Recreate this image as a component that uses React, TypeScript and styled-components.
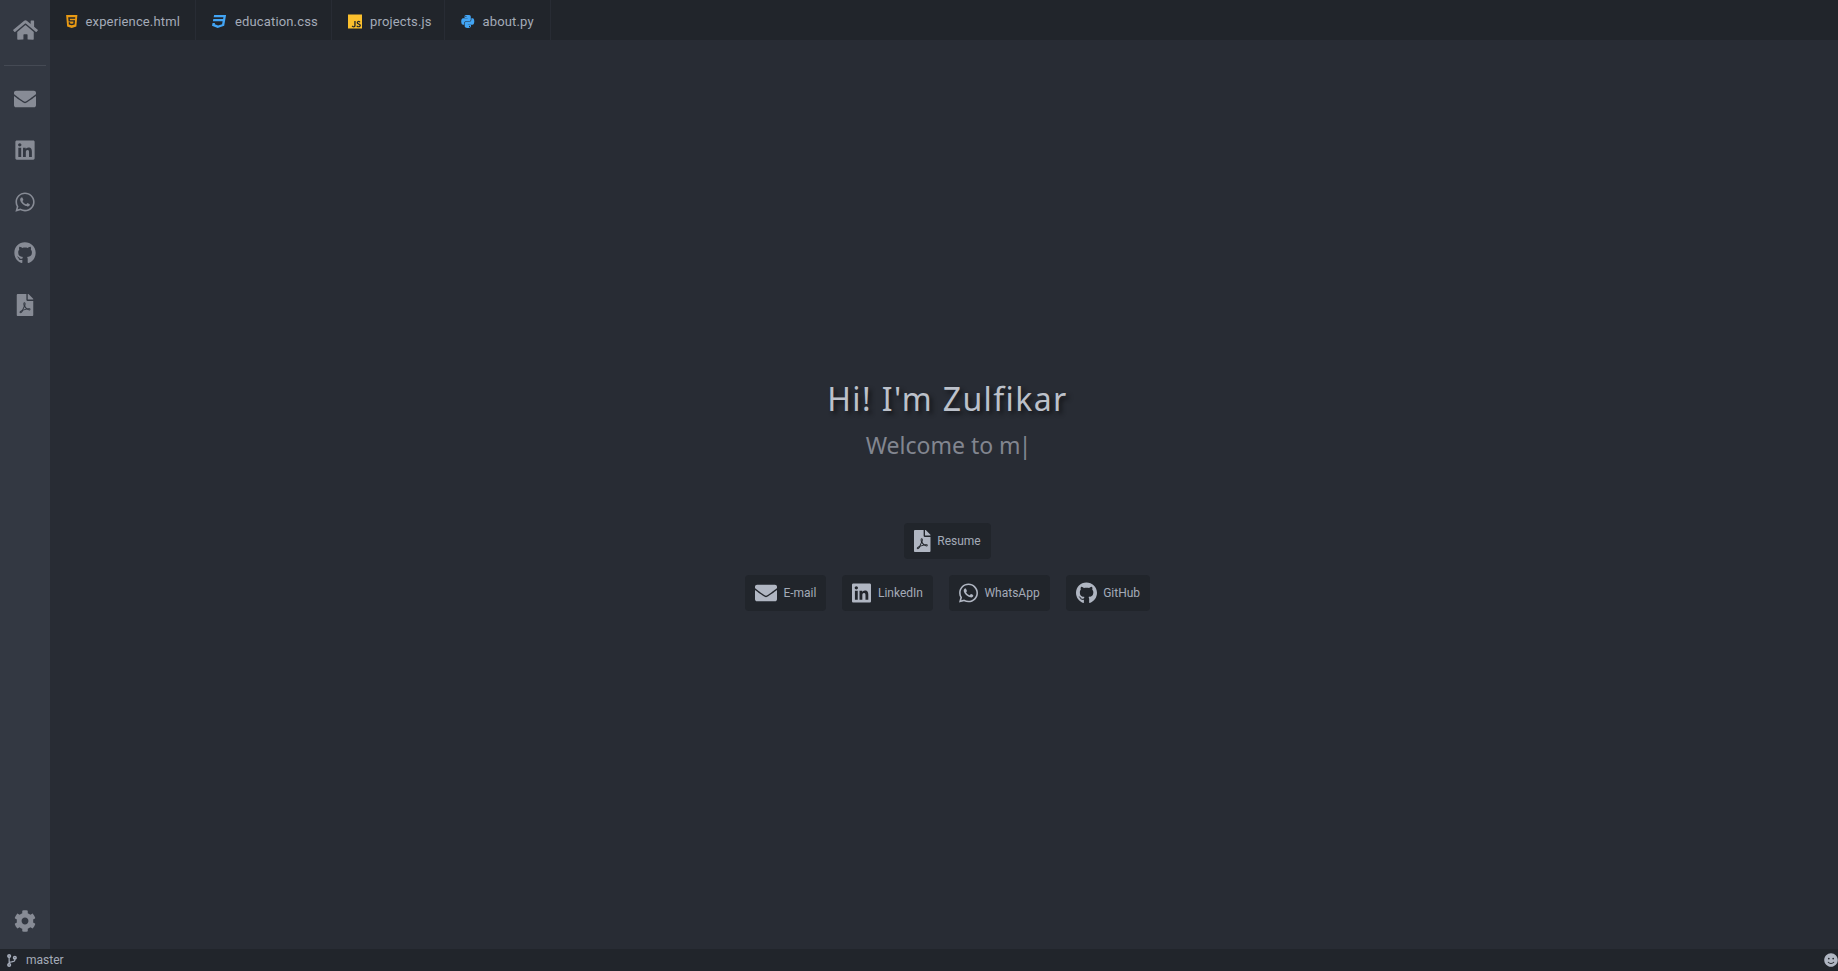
import React from 'react';
import styled, { createGlobalStyle } from 'styled-components';
import { FaHome, FaEnvelope, FaLinkedin, FaWhatsapp, FaGithub, FaFilePdf, FaCog, FaSmile, FaCodeBranch, FaPython, FaHtml5, FaCss3 } from 'react-icons/fa';
import { SiJavascript } from 'react-icons/si';

const GlobalStyle = createGlobalStyle`
  html, body { margin: 0; height: 100%; background: #282c34; }
  #root { height: 100%; }
  * { box-sizing: border-box; }
`;

const Page = styled.div`
  width: 1838px;
  height: 971px;
  display: flex;
  flex-direction: column;
  overflow: hidden;
  font-family: Roboto, "Noto Sans", sans-serif;
  color: #abb2bf;
`;

const Body = styled.div`
  flex: 1;
  display: flex;
  min-height: 0;
`;

const Sidebar = styled.nav`
  width: 50px;
  flex-shrink: 0;
  background: #333842;
  display: flex;
  flex-direction: column;
  align-items: center;
  color: #878b95;
  padding: 8px 0 2px;
`;

const SideLink = styled.a`
  width: 50px;
  height: 51.5px;
  display: flex;
  align-items: center;
  justify-content: center;
  font-size: 22px;
`;

const HomeLink = styled(SideLink)`
  height: 44px;

  svg {
    width: 25px;
    height: 22px;
  }
`;

const Divider = styled.hr`
  width: 42px;
  height: 1px;
  border: 0;
  margin: 13px 0 7px;
  background: #454a54;
`;

const Spacer = styled.div`
  flex: 1;
`;

const Main = styled.main`
  flex: 1;
  display: flex;
  flex-direction: column;
  min-width: 0;
`;

const TabBar = styled.div`
  height: 40px;
  background: #21252b;
  display: flex;
  flex-shrink: 0;
`;

const Tab = styled.div<{ $width: number }>`
  width: ${(p) => p.$width}px;
  flex-shrink: 0;
  display: flex;
  align-items: center;
  gap: 8px;
  padding: 2px 0 0 16px;
  font-size: 13px;
  letter-spacing: 0.15px;
  color: #a4abb8;
  border-right: 1px solid #282c34;
  white-space: nowrap;
`;

const TabIcon = styled.span<{ $color: string; $width: number }>`
  display: flex;
  width: ${(p) => p.$width}px;
  height: 15px;
  color: ${(p) => p.$color};

  svg {
    width: 100%;
    height: 100%;
  }
`;

const Hero = styled.section`
  flex: 1;
  display: flex;
  flex-direction: column;
  align-items: center;
  padding-left: 7px;
  padding-top: 337px;
`;

const Title = styled.h1`
  margin: 0;
  font-family: "Noto Sans", sans-serif;
  font-size: 32px;
  line-height: 44px;
  font-weight: 400;
  letter-spacing: 1.4px;
  color: #bcc1ca;
  text-shadow: 3px 3px 4px #14161a;
`;

const Subtitle = styled.p`
  margin: 6px 0 0;
  padding-left: 2px;
  font-family: "Noto Sans", sans-serif;
  font-size: 23px;
  line-height: 36px;
  color: #828690;
`;

const Cursor = styled.span`
  margin-left: -2px;
`;

const ButtonRow = styled.div<{ $top: number }>`
  display: flex;
  gap: 16px;
  margin-top: ${(p) => p.$top}px;
`;

const LinkButton = styled.a`
  height: 36px;
  display: flex;
  align-items: center;
  gap: 6.5px;
  padding: 0 10px;
  background: #21252b;
  border-radius: 4px;
  font-size: 12px;
  color: #a4abb8;
  white-space: nowrap;
`;

const ButtonIcon = styled.span<{ $width: number }>`
  display: flex;
  width: ${(p) => p.$width}px;
  height: 22px;
  color: #b0b6c2;

  svg {
    width: 100%;
    height: 100%;
  }
`;

const StatusBar = styled.footer`
  height: 22px;
  flex-shrink: 0;
  background: #21252b;
  display: flex;
  align-items: center;
  justify-content: space-between;
  padding: 0 0 0 7px;
  font-size: 12px;
  color: #a4abb8;
`;

const Branch = styled.div`
  display: flex;
  align-items: center;
  gap: 9px;

  svg {
    width: 10px;
    height: 13px;
  }
`;

const Smile = styled.span`
  display: flex;
  font-size: 14px;
  color: #b0b6c2;
`;

const tabs = [
  { name: 'experience.html', color: '#e99a14', tabWidth: 146, width: 11.5, icon: <FaHtml5 /> },
  { name: 'education.css', color: '#42a5f5', tabWidth: 136, width: 15, icon: <FaCss3 /> },
  { name: 'projects.js', color: '#fbc02d', tabWidth: 113, width: 14, icon: <SiJavascript /> },
  { name: 'about.py', color: '#42a5f5', tabWidth: 106, width: 13.5, icon: <FaPython /> },
];

const contacts = [
  { name: 'E-mail', width: 22, icon: <FaEnvelope /> },
  { name: 'LinkedIn', width: 19, icon: <FaLinkedin /> },
  { name: 'WhatsApp', width: 19, icon: <FaWhatsapp /> },
  { name: 'GitHub', width: 21, icon: <FaGithub /> },
];

const App = () => (
  <Page>
    <GlobalStyle />
    <Body>
      <Sidebar>
        <HomeLink>
          <FaHome />
        </HomeLink>
        <Divider />
        <SideLink>
          <FaEnvelope />
        </SideLink>
        <SideLink>
          <FaLinkedin />
        </SideLink>
        <SideLink>
          <FaWhatsapp />
        </SideLink>
        <SideLink>
          <FaGithub />
        </SideLink>
        <SideLink>
          <FaFilePdf />
        </SideLink>
        <Spacer />
        <SideLink>
          <FaCog />
        </SideLink>
      </Sidebar>
      <Main>
        <TabBar>
          {tabs.map((tab) => (
            <Tab key={tab.name} $width={tab.tabWidth}>
              <TabIcon $color={tab.color} $width={tab.width}>
                {tab.icon}
              </TabIcon>
              {tab.name}
            </Tab>
          ))}
        </TabBar>
        <Hero>
          <Title>Hi! I'm Zulfikar</Title>
          <Subtitle>
            Welcome to m<Cursor>|</Cursor>
          </Subtitle>
          <ButtonRow $top={60}>
            <LinkButton>
              <ButtonIcon $width={16.5}>
                <FaFilePdf />
              </ButtonIcon>
              Resume
            </LinkButton>
          </ButtonRow>
          <ButtonRow $top={16}>
            {contacts.map((c) => (
              <LinkButton key={c.name}>
                <ButtonIcon $width={c.width}>{c.icon}</ButtonIcon>
                {c.name}
              </LinkButton>
            ))}
          </ButtonRow>
        </Hero>
      </Main>
    </Body>
    <StatusBar>
      <Branch>
        <FaCodeBranch />
        master
      </Branch>
      <Smile>
        <FaSmile />
      </Smile>
    </StatusBar>
  </Page>
);

export default App;
